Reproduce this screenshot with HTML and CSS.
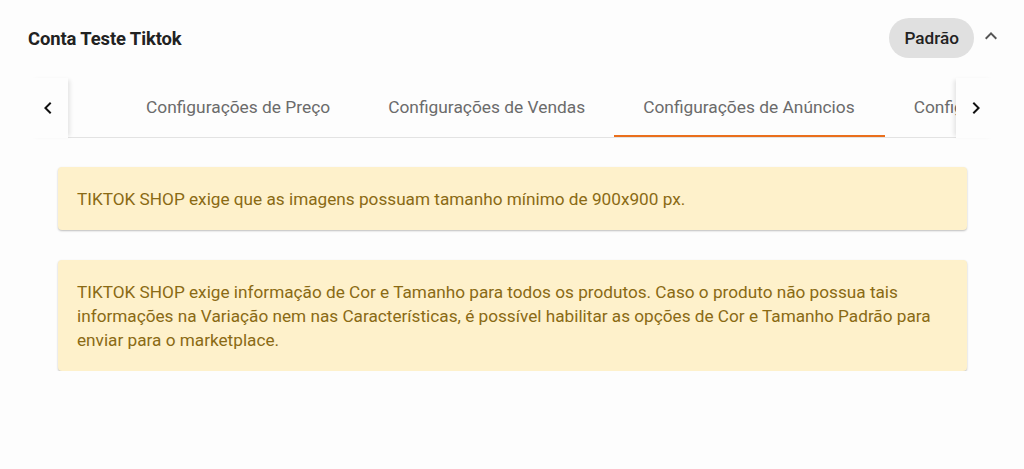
FILE: index.html
```html
<!DOCTYPE html>
<html lang="pt-BR">
<head>
<meta charset="utf-8">
<title>Conta Teste Tiktok</title>
<link rel="stylesheet" href="styles.css">
</head>
<body>
<div class="panel">
  <div class="panel-header">
    <h2 class="panel-title">Conta Teste Tiktok</h2>
    <div class="header-actions">
      <span class="chip">Padrão</span>
      <button class="icon-btn" aria-label="Recolher">
        <svg width="24" height="24" viewBox="0 0 24 24"><path d="M7.41 15.41 12 10.83l4.59 4.58L18 14l-6-6-6 6z" fill="#555"/></svg>
      </button>
    </div>
  </div>

  <div class="tabs">
    <button class="tab-arrow left" aria-label="Anterior">
      <svg width="24" height="24" viewBox="0 0 24 24"><path d="M15.41 16.59 10.83 12l4.58-4.59L14 6l-6 6 6 6z" fill="#111"/></svg>
    </button>
    <div class="tab-viewport">
      <div class="tab-track">
        <div class="tab">Configurações de Preço</div>
        <div class="tab">Configurações de Vendas</div>
        <div class="tab active">Configurações de Anúncios</div>
        <div class="tab">Configurações de Pedidos</div>
      </div>
    </div>
    <button class="tab-arrow right" aria-label="Próximo">
      <svg width="24" height="24" viewBox="0 0 24 24"><path d="M8.59 16.59 13.17 12 8.59 7.41 10 6l6 6-6 6z" fill="#111"/></svg>
    </button>
  </div>

  <div class="alerts">
    <div class="alert">TIKTOK SHOP exige que as imagens possuam tamanho mínimo de 900x900 px.</div>
    <div class="alert">TIKTOK SHOP exige informação de Cor e Tamanho para todos os produtos. Caso o produto não possua tais informações na Variação nem nas Características, é possível habilitar as opções de Cor e Tamanho Padrão para enviar para o marketplace.</div>
  </div>
</div>
</body>
</html>
```

FILE: styles.css
```css
* { box-sizing: border-box; }
html, body { margin: 0; padding: 0; background: #fdfdfd; }
body {
  font-family: Roboto, "Liberation Sans", Arial, sans-serif;
  color: #222;
}
.panel {
  padding: 18px 28px 0 28px;
}
.panel-header {
  display: flex;
  align-items: center;
  justify-content: space-between;
  height: 40px;
  margin-bottom: 20px;
}
.panel-title {
  margin: 0;
  font-size: 18.4px;
  font-weight: 700;
  color: #222;
  letter-spacing: -0.1px;
}
.header-actions {
  display: flex;
  align-items: center;
  gap: 5px;
  margin-right: -7px;
}
.chip {
  display: inline-flex;
  align-items: center;
  height: 40px;
  padding: 0 15px;
  border-radius: 20px;
  background: #e0e0e0;
  font-size: 17.2px;
  font-weight: 500;
  color: #222;
}
.icon-btn {
  border: 0;
  background: transparent;
  padding: 0;
  width: 24px;
  height: 24px;
  display: flex;
  align-items: center;
  justify-content: center;
  margin-top: -4px;
}
.tabs {
  display: flex;
  height: 60px;
  border-bottom: 1px solid #e3e3e3;
  position: relative;
}
.tab-arrow {
  flex: 0 0 40px;
  border: 0;
  padding: 0;
  background: #fdfdfd;
  display: flex;
  align-items: center;
  justify-content: center;
  position: relative;
  z-index: 1;
  margin-bottom: -1px;
}
.tab-arrow.left { box-shadow: 4px 0 4px -2px rgba(0,0,0,0.10); }
.tab-arrow.right { box-shadow: -4px 0 4px -2px rgba(0,0,0,0.10); }
.tab-viewport {
  flex: 1;
  overflow: hidden;
}
.tab-track {
  display: flex;
  height: 100%;
  padding-left: 49px;
}
.tab {
  flex: 0 0 auto;
  display: flex;
  align-items: center;
  padding: 1px 29px 0;
  font-size: 17.35px;
  color: #6b6b6b;
  white-space: nowrap;
  border-bottom: 2px solid transparent;
}
.tab.active {
  border-bottom-color: #ea6f1c;
  padding: 1px 30px 0 29px;
}
.alerts {
  display: flex;
  flex-direction: column;
  gap: 30px;
  padding: 29px 29px 0 30px;
}
.alert {
  background: #fef1cb;
  color: #8a6a14;
  font-size: 17.2px;
  line-height: 24px;
  padding: 20px 19px 19px 19px;
  border-radius: 4px;
  box-shadow: 0 1px 2px rgba(0,0,0,0.25);
}
```
